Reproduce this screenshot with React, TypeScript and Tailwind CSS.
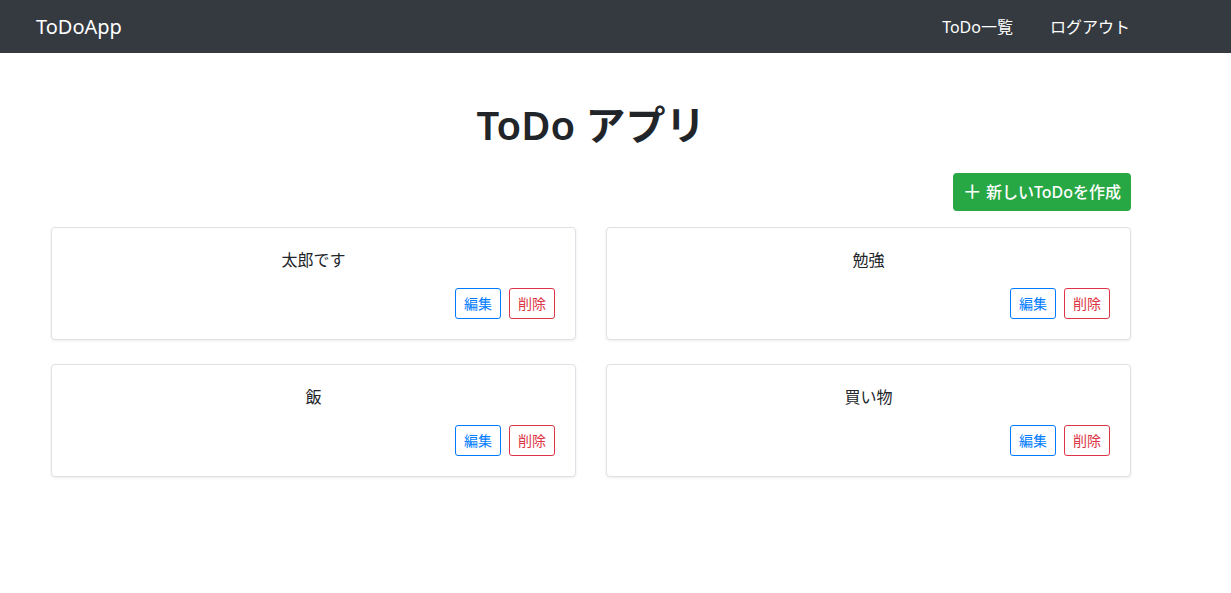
import React from "react";

const todos = ["太郎です", "勉強", "飯", "買い物"];

export default function App() {
  return (
    <div
      className="min-h-[593px] bg-white text-[#212529]"
      style={{ fontFamily: '"Noto Sans", "Noto Sans CJK JP", sans-serif' }}
    >
      <nav className="h-[53px] bg-[#343a40] flex items-center pl-[36px] pr-[101px]">
        <span className="text-white text-[20px] leading-[30px]">ToDoApp</span>
        <div className="ml-auto flex items-center gap-[37px] text-white text-[16px]">
          <span>ToDo一覧</span>
          <span>ログアウト</span>
        </div>
      </nav>
      <main className="ml-[51px] w-[1080px] pt-[48px]">
        <h1 className="text-center text-[40px] font-semibold leading-[48px] text-[#212529]">
          ToDo アプリ
        </h1>
        <div className="flex justify-end mt-[24px]">
          <button className="h-[38px] px-[10px] rounded-[4px] bg-[#28a745] text-white text-[16px] font-medium flex items-center gap-[4px]">
            <span className="text-[19px] leading-none">＋</span>
            <span>新しいToDoを作成</span>
          </button>
        </div>
        <div className="grid grid-cols-2 gap-x-[30px] gap-y-[24px] mt-[16px]">
          {todos.map((t) => (
            <div
              key={t}
              className="border border-[#dee2e6] rounded-[4px] shadow-[0_1px_3px_rgba(0,0,0,0.08)] p-[20px] bg-white"
            >
              <div className="text-center text-[16px] leading-[24px] mb-[16px]">{t}</div>
              <div className="flex justify-end gap-[8px]">
                <button className="h-[31px] w-[46px] border border-[#007bff] text-[#007bff] rounded-[3px] text-[14px]">
                  編集
                </button>
                <button className="h-[31px] w-[46px] border border-[#dc3545] text-[#dc3545] rounded-[3px] text-[14px]">
                  削除
                </button>
              </div>
            </div>
          ))}
        </div>
      </main>
    </div>
  );
}
